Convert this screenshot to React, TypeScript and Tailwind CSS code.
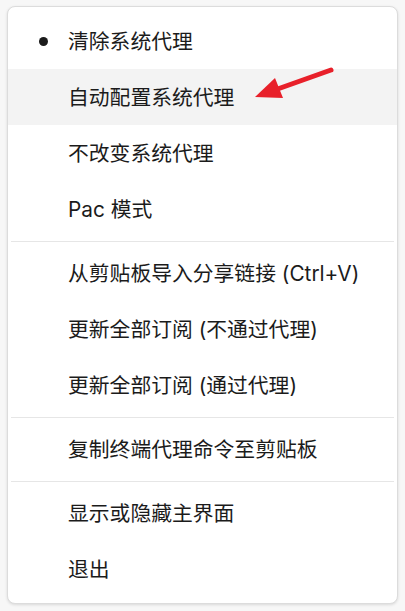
import React from "react";

type Item = { label: string; checked?: boolean; hover?: boolean } | "divider";

const items: Item[] = [
  { label: "清除系统代理", checked: true },
  { label: "自动配置系统代理", hover: true },
  { label: "不改变系统代理" },
  { label: "Pac 模式" },
  "divider",
  { label: "从剪贴板导入分享链接 (Ctrl+V)" },
  { label: "更新全部订阅 (不通过代理)" },
  { label: "更新全部订阅 (通过代理)" },
  "divider",
  { label: "复制终端代理命令至剪贴板" },
  "divider",
  { label: "显示或隐藏主界面" },
  { label: "退出" },
];

export default function App() {
  return (
    <div
      className="w-[405px] h-[611px] bg-[#f7f7f7] pt-[6px] px-[7px]"
      style={{ fontFamily: '"Inter", "Noto Sans CJK SC", sans-serif' }}
    >
      <div className="relative w-[391px] rounded-[8px] border border-[#dcdcdc] bg-white py-[6px] shadow-[0_1px_3px_rgba(0,0,0,0.12)]">
        {items.map((it, i) =>
          it === "divider" ? (
            <div key={i} className="h-[8px] flex items-center px-[3px]">
              <div className="h-px w-full bg-[#e6e6e6]" />
            </div>
          ) : (
            <div
              key={i}
              className={`h-[56px] flex items-center text-[20.8px] text-[#1b1b1b] ${
                it.hover ? "bg-[#f3f3f3]" : ""
              }`}
            >
              <div className="w-[60px] flex justify-end pr-[20px]">
                {it.checked ? (
                  <div className="w-[9px] h-[9px] rounded-full bg-[#1b1b1b] mt-[1px]" />
                ) : null}
              </div>
              <span className="leading-none mt-[2px]">{it.label}</span>
            </div>
          )
        )}
        <svg
          className="absolute left-[232px] top-[49px]"
          width="100"
          height="55"
          viewBox="240 56 100 55"
        >
          <line
            x1="331"
            y1="70"
            x2="272"
            y2="91"
            stroke="#e8202a"
            strokeWidth="5"
            strokeLinecap="round"
          />
          <polygon points="255,97 275,78 283,98" fill="#e8202a" />
        </svg>
      </div>
    </div>
  );
}
